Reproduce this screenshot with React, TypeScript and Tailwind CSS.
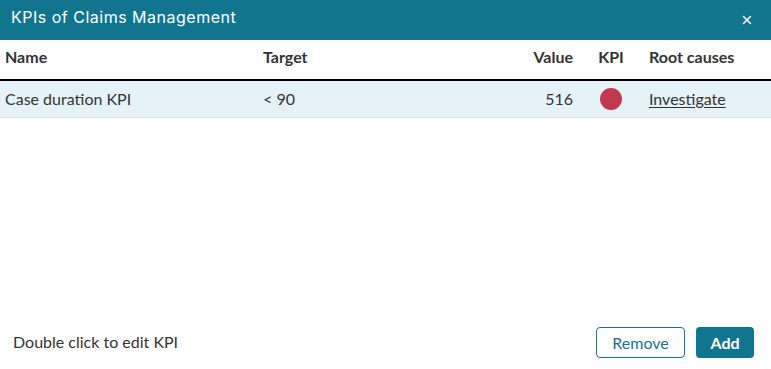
import { X } from "lucide-react"

const rows = [{ name: "Case duration KPI", target: "< 90", value: "516", status: "bad" }]

export default function App() {
  return (
    <div className="w-[771px] h-[369px] flex flex-col bg-white text-[#333] text-[16px]" style={{ fontFamily: "Lato, 'Open Sans', sans-serif" }}>
      <div className="h-10 shrink-0 flex items-center justify-between bg-[#12758f] pl-[11px] pr-[17px] text-white">
        <span className="text-[16px] tracking-[0.5px] pb-[6px]" style={{ fontFamily: "Inter, sans-serif" }}>
          KPIs of Claims Management
        </span>
        <X className="w-[14px] h-[14px]" strokeWidth={2.5} />
      </div>

      <table className="w-full border-collapse">
        <thead>
          <tr className="h-[40px] border-b-2 border-black font-bold text-left">
            <th className="pl-[5px] pb-[6px] w-[263px] font-bold">Name</th>
            <th className="pb-[6px] font-bold">Target</th>
            <th className="pb-[6px] font-bold text-right">Value</th>
            <th className="pb-[6px] font-bold text-center w-[76px]">KPI</th>
            <th className="pb-[6px] font-bold w-[122px] text-left">Root causes</th>
          </tr>
        </thead>
        <tbody>
          {rows.map((r) => (
            <tr key={r.name} className="h-[37px] bg-[#e5f3f9] border-b border-[#dde3e6]">
              <td className="pl-[5px]">{r.name}</td>
              <td>{r.target}</td>
              <td className="text-right">{r.value}</td>
              <td>
                <div className="mx-auto w-[22px] h-[22px] rounded-full bg-[#c0394f]" />
              </td>
              <td>
                <a className="underline underline-offset-2 cursor-pointer">Investigate</a>
              </td>
            </tr>
          ))}
        </tbody>
      </table>

      <div className="flex-1" />

      <div className="h-[58px] shrink-0 flex items-center justify-between pl-[13px] pr-[17px] pt-[3px]">
        <span>Double click to edit KPI</span>
        <div className="flex gap-[11px] pt-[2px]">
          <button className="h-[31px] w-[89px] rounded border border-[#12758f] text-[#12758f]">Remove</button>
          <button className="h-[31px] w-[58px] rounded bg-[#12758f] text-white font-bold">Add</button>
        </div>
      </div>
    </div>
  )
}
